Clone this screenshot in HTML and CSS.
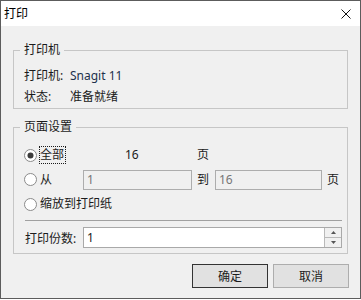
FILE: index.html
```html
<!DOCTYPE html>
<html lang="zh-CN">
<head>
  <meta charset="UTF-8" />
  <meta name="viewport" content="width=device-width, initial-scale=1.0" />
  <title>打印</title>
  <link rel="stylesheet" href="styles.css">
</head>
<body>
  <div class="window">
    <div class="titlebar">
      <span class="title">打印</span>
      <svg class="close" width="10" height="10" viewBox="0 0 10 10">
        <path d="M0.5 0.5 L9.5 9.5 M9.5 0.5 L0.5 9.5" stroke="#111" stroke-width="1" fill="none" />
      </svg>
    </div>

    <div class="dialog-body">
      <fieldset class="group group-printer">
        <legend>打印机</legend>
        <div class="info">
          <span>打印机:</span>
          <span class="value-latin">Snagit 11</span>
          <span>状态:</span>
          <span>准备就绪</span>
        </div>
      </fieldset>

      <fieldset class="group group-pages">
        <legend>页面设置</legend>

        <div class="choice-row row-all">
          <label class="choice">
            <svg class="radio" width="13" height="13" viewBox="0 0 13 13">
              <circle cx="6.5" cy="6.5" r="6" fill="#fff" stroke="#8a8a8a" />
              <circle cx="6.5" cy="6.5" r="3" fill="#3c3c3c" />
            </svg>
            <span class="choice-text focused">全部</span>
          </label>
          <span class="page-count">16</span>
          <span>页</span>
        </div>

        <div class="choice-row row-range">
          <label class="choice">
            <svg class="radio" width="13" height="13" viewBox="0 0 13 13">
              <circle cx="6.5" cy="6.5" r="6" fill="#fff" stroke="#8a8a8a" />
            </svg>
            <span class="choice-text">从</span>
          </label>
          <input class="field field-from" type="text" value="1" disabled />
          <span class="to">到</span>
          <input class="field field-to" type="text" value="16" disabled />
          <span>页</span>
        </div>

        <div class="choice-row row-fit">
          <label class="choice">
            <svg class="radio" width="13" height="13" viewBox="0 0 13 13">
              <circle cx="6.5" cy="6.5" r="6" fill="#fff" stroke="#8a8a8a" />
            </svg>
            <span class="choice-text">缩放到打印纸</span>
          </label>
        </div>

        <div class="separator"></div>

        <div class="copies-row">
          <span class="copies-label">打印份数:</span>
          <div class="spin">
            <span class="spin-value">1</span>
            <div class="spin-buttons">
              <div class="spin-btn">
                <svg width="5" height="3" viewBox="0 0 5 3"><path d="M2.5 0 L5 3 L0 3 Z" fill="#555" /></svg>
              </div>
              <div class="spin-btn">
                <svg width="5" height="3" viewBox="0 0 5 3"><path d="M0 0 L5 0 L2.5 3 Z" fill="#555" /></svg>
              </div>
            </div>
          </div>
        </div>
      </fieldset>

      <div class="actions">
        <button class="btn btn-default">确定</button>
        <button class="btn">取消</button>
      </div>
    </div>
  </div>
</body>
</html>
```

FILE: styles.css
```css
* {
  box-sizing: border-box;
}

body {
  margin: 0;
  background: #ffffff;
  font-family: "Noto Sans", "Noto Sans CJK SC", sans-serif;
  font-size: 12px;
  color: #1b1b1b;
}

.window {
  width: 361px;
  height: 299px;
  border: 1px solid #5c5c5c;
  background: #f0f0f0;
  display: flex;
  flex-direction: column;
}

.titlebar {
  height: 25px;
  background: #ffffff;
  display: flex;
  align-items: center;
  justify-content: space-between;
  padding: 0 9px 0 3px;
}

.title {
  line-height: 16px;
  color: #000;
}

.dialog-body {
  padding: 16px 12px 0 12px;
}

.group {
  margin: 0;
  min-width: 0;
  border: 1px solid #c6c6c6;
}

.group legend {
  padding: 0 4px;
  margin-left: -4px;
  line-height: 16px;
}

.group-printer {
  padding: 10px 10px 3px 10px;
}

.info {
  display: grid;
  grid-template-columns: 46px auto;
  row-gap: 5px;
  line-height: 16px;
}

.value-latin {
  color: #22304c;
}

.group-pages {
  margin-top: 10px;
  padding: 8px 5px 5px 10px;
}

.choice-row {
  display: flex;
  align-items: center;
  height: 24px;
  line-height: 16px;
}

.row-range {
  height: 25px;
}

.choice {
  display: flex;
  align-items: center;
  width: 59px;
  flex-shrink: 0;
}

.row-fit .choice {
  width: auto;
}

.radio {
  margin-right: 2px;
  flex-shrink: 0;
}

.choice-text {
  border: 1px dotted transparent;
  padding-right: 1px;
}

.choice-text.focused {
  border-color: #1b1b1b;
}

.page-count {
  width: 114px;
  padding-left: 42px;
}

.field {
  height: 20px;
  border: 1px solid #adadad;
  background: #f0f0f0;
  color: #767676;
  font-family: inherit;
  font-size: 12px;
  padding: 0 3px;
  margin: 0;
}

.field-from {
  width: 109px;
  margin-right: 5px;
}

.to {
  width: 12px;
  margin-right: 6px;
}

.field-to {
  width: 107px;
  margin-right: 5px;
}

.separator {
  margin: 4px 0 0 1px;
  border-top: 1px solid #a0a0a0;
}

.copies-row {
  display: flex;
  align-items: center;
  margin-top: 6px;
  line-height: 16px;
}

.copies-label {
  width: 59px;
  padding-left: 1px;
  padding-top: 3px;
}

.spin {
  display: flex;
  width: 259px;
  height: 21px;
  border: 1px solid #a9a9a9;
  background: #ffffff;
}

.spin-value {
  flex: 1;
  padding-left: 3px;
  line-height: 19px;
  color: #1b1b1b;
}

.spin-buttons {
  width: 17px;
  display: flex;
  flex-direction: column;
  border-left: 1px solid #b9b9b9;
}

.spin-btn {
  flex: 1;
  display: flex;
  align-items: center;
  justify-content: center;
  background: #f0f0f0;
}

.spin-btn + .spin-btn {
  border-top: 1px solid #b9b9b9;
}

.actions {
  display: flex;
  justify-content: flex-end;
  gap: 5px;
  margin-top: 10px;
  margin-right: -1px;
}

.btn {
  width: 76px;
  height: 24px;
  border: 1px solid #adadad;
  background: #e1e1e1;
  font-family: inherit;
  font-size: 12px;
  color: #1b1b1b;
  padding: 0;
}

.btn-default {
  border-color: #333333;
}
```
